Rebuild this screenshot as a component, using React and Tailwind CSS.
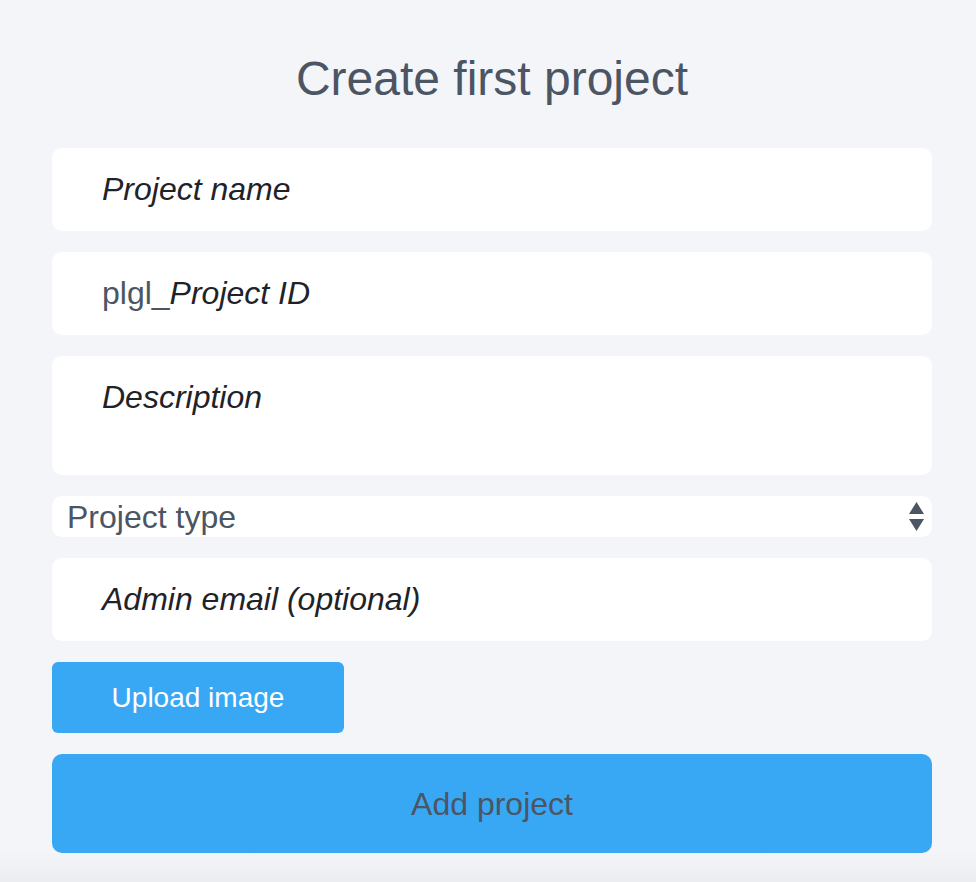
export default function App() {
  const field = "flex rounded-[10px] bg-white pl-[50px] text-[32px] leading-[37px]";
  return (
    <div
      className="min-h-[882px] bg-[#f4f5f9] text-[#4b5563]"
      style={{ fontFamily: '"Liberation Sans", Arial, sans-serif' }}
    >
      <div className="ml-[52px] w-[880px] pt-[51px]">
        <h1 className="text-center text-[48px] leading-[55px] text-[#4b5563]">Create first project</h1>
        <div className="mt-[42px] flex flex-col gap-[21px]">
          <div className={`${field} h-[83px] items-center italic text-[#1f2329]`}>Project name</div>
          <div className={`${field} h-[83px] items-center`}>
            <span>plgl_</span>
            <span className="italic text-[#1f2329]">Project ID</span>
          </div>
          <div className={`${field} h-[119px] pt-[23px] italic text-[#1f2329]`}>Description</div>
          <div className="flex h-[41px] items-center justify-between rounded-[10px] bg-white pl-[15px] pr-[8px] text-[32px]">
            <span>Project type</span>
            <svg width="15" height="30" viewBox="0 0 15 30" className="fill-[#4b5563]">
              <path d="M7.5 0 L15 12 L0 12 Z" />
              <path d="M0 17 L15 17 L7.5 29 Z" />
            </svg>
          </div>
          <div className={`${field} h-[83px] items-center italic text-[#1f2329]`}>Admin email (optional)</div>
          <button
            type="button"
            className="flex h-[71px] w-[292px] items-center justify-center rounded-[6px] bg-[#38a8f5] text-[28px] text-white"
          >
            Upload image
          </button>
          <button
            type="button"
            className="flex h-[99px] w-full items-center justify-center rounded-[10px] bg-[#38a8f5] text-[32px] text-[#4b5563]"
          >
            Add project
          </button>
        </div>
      </div>
      <div className="mt-[1px] h-[28px] bg-gradient-to-b from-[#f3f4f8] to-[#ecedf1]" />
    </div>
  );
}
